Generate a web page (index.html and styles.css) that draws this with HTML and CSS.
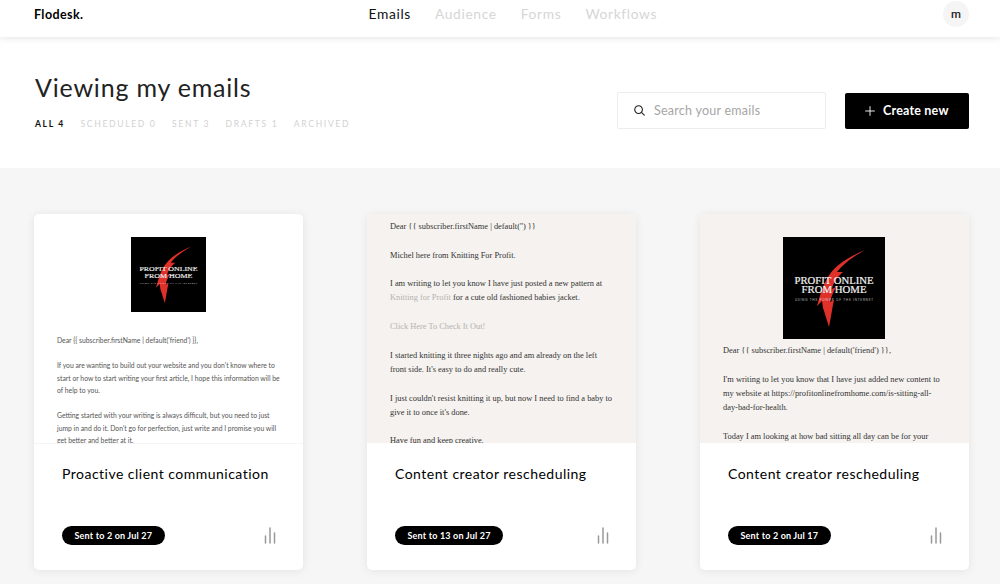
FILE: index.html
```html
<!DOCTYPE html>
<html lang="en">
<head>
<meta charset="UTF-8">
<meta name="viewport" content="width=device-width, initial-scale=1.0">
<title>Emails - Flodesk</title>
<link rel="stylesheet" href="styles.css">
</head>
<body>
<header class="topbar">
  <a class="logo" href="#">Flodesk.</a>
  <nav class="nav">
    <a class="active" href="#">Emails</a>
    <a href="#">Audience</a>
    <a href="#">Forms</a>
    <a href="#">Workflows</a>
  </nav>
  <div class="avatar">m</div>
</header>

<section class="page-head">
  <div>
    <h1>Viewing my emails</h1>
    <div class="tabs">
      <a class="active" href="#">All 4</a>
      <a href="#">Scheduled 0</a>
      <a href="#">Sent 3</a>
      <a href="#">Drafts 1</a>
      <a href="#">Archived</a>
    </div>
  </div>
  <div class="actions">
    <label class="search">
      <svg width="11" height="11" viewBox="0 0 12 12" fill="none" stroke="#222" stroke-width="1.2" stroke-linecap="round">
        <circle cx="5" cy="5" r="4.2"/>
        <path d="M8.1 8.1l3.1 3"/>
      </svg>
      <input type="text" placeholder="Search your emails">
    </label>
    <button class="create" type="button">
      <svg width="10" height="10" viewBox="0 0 10 10" stroke="#fff" stroke-width="0.9">
        <path d="M5 0.2v9.6M0.2 5h9.6"/>
      </svg>
      Create new
    </button>
  </div>
</section>

<main class="cards">
  <article class="card">
    <div class="preview preview-plain">
      <svg class="brand brand-small" viewBox="0 0 102 102">
        <rect width="102" height="102" fill="#000"/>
        <path d="M82 13C68 19 54 27 47 37C41 45 38 55 34 69L39 64L40 71C42 77 44 83 46 90C48 80 49 72 51 63L47 65C48 60 50 56 53 50L49 52C50 46 54 40 60 35L54 35C60 27 71 19 82 13Z" fill="#e0302a"/>
        <text class="brand-name" x="51" y="46.5" textLength="79" lengthAdjust="spacingAndGlyphs">PROFIT ONLINE</text>
        <text class="brand-name" x="51" y="56" textLength="65" lengthAdjust="spacingAndGlyphs">FROM HOME</text>
        <text class="brand-tag" x="51" y="63.5" textLength="78">USING THE POWER OF THE INTERNET</text>
      </svg>
      <p>Dear {{ subscriber.firstName | default('friend') }},</p>
      <p>If you are wanting to build out your website and you don't know where to<br>start or how to start writing your first article, I hope this information will be<br>of help to you.</p>
      <p>Getting started with your writing is always difficult, but you need to just<br>jump in and do it. Don't go for perfection, just write and I promise you will<br>get better and better at it.</p>
    </div>
    <div class="card-body">
      <h2>Proactive client communication</h2>
      <div class="card-foot">
        <span class="pill">Sent to 2 on Jul 27</span>
        <svg class="stats" width="12" height="17" viewBox="0 0 12 17" stroke="#999" stroke-width="1.5" stroke-linecap="round">
          <path d="M1.5 9v7M6 1v15M10.5 6v10"/>
        </svg>
      </div>
    </div>
  </article>

  <article class="card">
    <div class="preview preview-serif preview-top">
      <p>Dear {{ subscriber.firstName | default('') }}</p>
      <p>Michel here from Knitting For Profit.</p>
      <p>I am writing to let you know I have just posted a new pattern at<br><a href="#">Knitting for Profit</a> for a cute old fashioned babies jacket.</p>
      <p><a href="#">Click Here To Check It Out!</a></p>
      <p>I started knitting it three nights ago and am already on the left<br>front side. It's easy to do and really cute.</p>
      <p>I just couldn't resist knitting it up, but now I need to find a baby to<br>give it to once it's done.</p>
      <p>Have fun and keep creative.</p>
    </div>
    <div class="card-body">
      <h2>Content creator rescheduling</h2>
      <div class="card-foot">
        <span class="pill">Sent to 13 on Jul 27</span>
        <svg class="stats" width="12" height="17" viewBox="0 0 12 17" stroke="#999" stroke-width="1.5" stroke-linecap="round">
          <path d="M1.5 9v7M6 1v15M10.5 6v10"/>
        </svg>
      </div>
    </div>
  </article>

  <article class="card">
    <div class="preview preview-serif">
      <svg class="brand" viewBox="0 0 102 102">
        <rect width="102" height="102" fill="#000"/>
        <path d="M82 13C68 19 54 27 47 37C41 45 38 55 34 69L39 64L40 71C42 77 44 83 46 90C48 80 49 72 51 63L47 65C48 60 50 56 53 50L49 52C50 46 54 40 60 35L54 35C60 27 71 19 82 13Z" fill="#e0302a"/>
        <text class="brand-name" x="51" y="46.5" textLength="79" lengthAdjust="spacingAndGlyphs">PROFIT ONLINE</text>
        <text class="brand-name" x="51" y="56" textLength="65" lengthAdjust="spacingAndGlyphs">FROM HOME</text>
        <text class="brand-tag" x="51" y="63.5" textLength="78">USING THE POWER OF THE INTERNET</text>
      </svg>
      <p>Dear {{ subscriber.firstName | default('friend') }},</p>
      <p>I'm writing to let you know that I have just added new content to<br>my website at https://profitonlinefromhome.com/is-sitting-all-<br>day-bad-for-health.</p>
      <p>Today I am looking at how bad sitting all day can be for your</p>
    </div>
    <div class="card-body">
      <h2>Content creator rescheduling</h2>
      <div class="card-foot">
        <span class="pill">Sent to 2 on Jul 17</span>
        <svg class="stats" width="12" height="17" viewBox="0 0 12 17" stroke="#999" stroke-width="1.5" stroke-linecap="round">
          <path d="M1.5 9v7M6 1v15M10.5 6v10"/>
        </svg>
      </div>
    </div>
  </article>
</main>
</body>
</html>
```
FILE: styles.css
```css
* {
  box-sizing: border-box;
}
body {
  margin: 0;
  height: 584px;
  overflow: hidden;
  background: #f6f6f6;
  color: #111;
  font-family: Lato, sans-serif;
}
a {
  color: inherit;
  text-decoration: none;
}

/* top bar */
.topbar {
  position: relative;
  z-index: 1;
  display: grid;
  grid-template-columns: 334.5px 1fr auto;
  height: 37px;
  padding: 1px 31px 0 34px;
  background: #fff;
  box-shadow: 0 1px 7px rgba(0, 0, 0, 0.11);
}
.logo {
  font-size: 12.5px;
  font-weight: 700;
  line-height: 27px;
  letter-spacing: 0.4px;
  color: #000;
}
.nav {
  display: flex;
  gap: 24px;
  font-size: 13.8px;
  line-height: 26px;
  letter-spacing: 0.65px;
  color: #d6d6d6;
}
.nav .active {
  color: #111;
}
.avatar {
  width: 26px;
  height: 26px;
  border-radius: 50%;
  background: #f5f5f5;
  font-size: 12px;
  line-height: 26px;
  text-align: center;
  -webkit-text-stroke: 0.2px #111;
}

/* heading + actions */
.page-head {
  display: flex;
  justify-content: space-between;
  height: 131px;
  padding: 35px 31px 0 35px;
  background: #fff;
}
h1 {
  margin: 0;
  font-size: 25px;
  font-weight: 400;
  line-height: 30px;
  letter-spacing: 0.8px;
  color: #222;
}
.tabs {
  display: flex;
  gap: 15.5px;
  margin-top: 16px;
  font-size: 8.6px;
  line-height: 12px;
  letter-spacing: 1.65px;
  text-transform: uppercase;
  color: #d2d2d2;
}
.tabs .active {
  font-weight: 700;
  color: #111;
}
.actions {
  display: flex;
  align-items: flex-start;
  gap: 19px;
  padding-top: 20px;
}
.search {
  display: flex;
  align-items: center;
  gap: 9px;
  width: 209px;
  height: 37px;
  padding: 0 16px;
  border: 1px solid #ededed;
  border-radius: 2px;
}
.search input {
  width: 150px;
  padding: 0;
  border: 0;
  outline: 0;
  font: 12.5px Lato, sans-serif;
  letter-spacing: 0.25px;
}
.search input::placeholder {
  color: #a6a6a6;
}
.create {
  display: flex;
  align-items: center;
  gap: 8px;
  width: 124px;
  height: 36px;
  margin-top: 0.5px;
  padding: 0 0 0 20px;
  border: 0;
  border-radius: 2px;
  background: #000;
  color: #fff;
  font: 700 12.5px Lato, sans-serif;
  letter-spacing: 0.2px;
  white-space: nowrap;
}

/* email cards */
.cards {
  display: grid;
  grid-template-columns: repeat(3, 269px);
  gap: 64px;
  padding: 46px 31px 0 34px;
}
.card {
  height: 356px;
  overflow: hidden;
  border-radius: 5px;
  background: #fff;
  box-shadow: 0 1px 10px rgba(0, 0, 0, 0.08);
}
.preview {
  height: 229px;
  padding: 23px 0 0 23px;
  overflow: hidden;
  white-space: nowrap;
}
.preview p {
  margin: 0 0 12.5px;
}
.preview-plain {
  height: 230px;
  margin-bottom: -1px;
  border-bottom: 1px solid #f5f5f5;
  font-size: 6.8px;
  line-height: 12.5px;
  color: #555;
}
.preview-serif {
  background: #f5f2ef;
  font-family: "Liberation Serif", serif;
  font-size: 8.4px;
  line-height: 14.3px;
  color: #333;
}
.preview-serif p {
  margin-bottom: 14.3px;
}
.preview-serif a {
  color: #b5b2af;
}
.preview-top {
  padding-top: 6px;
}
.brand {
  display: block;
  width: 102px;
  height: 102px;
  margin: 0 0 5px 60px;
}
.brand-small {
  width: 75px;
  height: 75px;
  margin: 0 0 22px 74px;
}
.brand text {
  fill: #f2f2f2;
  text-anchor: middle;
}
.brand-name {
  font: 9.8px "Liberation Serif", serif;
  stroke: #f2f2f2;
  stroke-width: 0.2px;
}
.brand-small .brand-name {
  font-size: 9.2px;
}
.brand-tag {
  font: 3px Lato, sans-serif;
  opacity: 0.7;
}
.card-body {
  height: 127px;
  padding: 20px 27px 0 28px;
}
h2 {
  margin: 0;
  font-size: 14px;
  font-weight: 400;
  line-height: 22px;
  letter-spacing: 0.48px;
  white-space: nowrap;
  color: #000;
}
.card-foot {
  display: flex;
  justify-content: space-between;
  align-items: center;
  margin-top: 41px;
}
.pill {
  height: 19px;
  padding: 0 12.5px;
  border-radius: 10px;
  background: #000;
  color: #fff;
  font-size: 9px;
  font-weight: 700;
  line-height: 19px;
  letter-spacing: 0.18px;
  white-space: nowrap;
}
```
